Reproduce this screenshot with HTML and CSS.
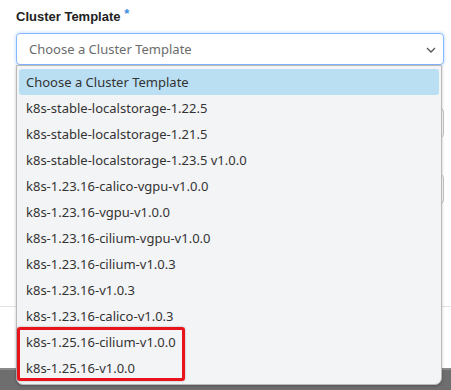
FILE: index.html
```html
<!DOCTYPE html>
<html lang="en">

<head>
    <title>Cluster Template</title>
    <meta charset="UTF-8">
    <link rel="stylesheet" href="styles.css">
</head>

<body>
<div class="panel">
    <!-- 클러스터 템플릿 선택 -->
    <div class="field">
        <label class="field-label">Cluster Template <span class="required">*</span></label>
        <div class="select-wrap">
            <div class="select-box">
                <span class="placeholder">Choose a Cluster Template</span>
                <svg class="chevron" width="10" height="6" viewBox="0 0 10 6">
                    <path d="M1 1 L5 5 L9 1" fill="none" stroke="#555" stroke-width="1.3"/>
                </svg>
            </div>

            <!-- 열린 드롭다운 목록 -->
            <ul class="options">
                <li class="option selected">Choose a Cluster Template</li>
                <li class="option">k8s-stable-localstorage-1.22.5</li>
                <li class="option">k8s-stable-localstorage-1.21.5</li>
                <li class="option">k8s-stable-localstorage-1.23.5 v1.0.0</li>
                <li class="option">k8s-1.23.16-calico-vgpu-v1.0.0</li>
                <li class="option">k8s-1.23.16-vgpu-v1.0.0</li>
                <li class="option">k8s-1.23.16-cilium-vgpu-v1.0.0</li>
                <li class="option">k8s-1.23.16-cilium-v1.0.3</li>
                <li class="option">k8s-1.23.16-v1.0.3</li>
                <li class="option">k8s-1.23.16-calico-v1.0.3</li>
                <li class="option">k8s-1.25.16-cilium-v1.0.0</li>
                <li class="option">k8s-1.25.16-v1.0.0</li>
            </ul>
            <div class="highlight-box"></div>
        </div>
    </div>

    <!-- 목록 뒤에 가려진 입력칸 -->
    <div class="ghost-input first"></div>
    <div class="ghost-input second"></div>
    <div class="divider"></div>
</div>
<div class="footer"></div>
</body>

</html>
```

FILE: styles.css
```css
/* 전체 배경 */
body {
    margin: 0;
    padding: 0;
    background-color: #ffffff;
    font-family: 'Noto Sans', sans-serif;
    overflow: hidden;
    height: 390px;
}

.panel {
    padding: 8px 7px 0 16px;
}

.field-label {
    display: block;
    font-family: 'Liberation Sans', Arial, sans-serif;
    font-weight: bold;
    font-size: 13px;
    line-height: 18px;
    color: #222;
    margin-bottom: 7px;
}

.required {
    color: #3d8fe0;
    font-size: 13px;
    vertical-align: top;
    position: relative;
    top: -3px;
}

.select-wrap {
    position: relative;
}

/* 선택 상자 */
.select-box {
    height: 32px;
    box-sizing: border-box;
    border: 1px solid #86b7fe;
    border-radius: 4px;
    box-shadow: 0 0 3px 1px rgba(13, 110, 253, 0.18);
    display: flex;
    align-items: center;
    justify-content: space-between;
    padding: 0 7px 0 12px;
    background-color: #ffffff;
}

.placeholder {
    font-size: 13px;
    color: #6c6c6c;
}

.chevron {
    margin-top: 1px;
}

/* 드롭다운 목록 */
.options {
    position: absolute;
    top: 32px;
    left: 0;
    width: 426px;
    box-sizing: border-box;
    margin: 0;
    padding: 3px 2px;
    list-style: none;
    background-color: #f3f4f6;
    border: 1px solid #b9b9b9;
    border-radius: 0 0 7px 7px;
    box-shadow: 0 1px 3px rgba(0, 0, 0, 0.25);
    z-index: 5;
}

.option {
    height: 26px;
    line-height: 26px;
    padding-left: 7px;
    font-size: 13px;
    color: #333;
    white-space: nowrap;
}

.option.selected {
    background-color: #bbdff2;
    border-radius: 3px;
}

/* 강조 표시 상자 */
.highlight-box {
    position: absolute;
    top: 294px;
    left: 1px;
    width: 168px;
    height: 54px;
    box-sizing: border-box;
    border: 3px solid #e8131b;
    border-radius: 3px;
    box-shadow: 0 0 2px rgba(0, 0, 0, 0.35);
    z-index: 6;
}

/* 가려진 입력칸 */
.ghost-input {
    height: 30px;
    border: 1px solid #c8c8c8;
    border-radius: 4px;
    box-sizing: border-box;
}

.ghost-input.first {
    margin-top: 43px;
}

.ghost-input.second {
    margin-top: 36px;
    height: 30px;
}

.divider {
    margin: 102px -7px 0 -16px;
    height: 1px;
    background-color: #e3e3e3;
}

.footer {
    margin-top: 61px;
    height: 22px;
    background-color: #6e6e6e;
    border-top: 2px solid #8a8a8a;
}
```
